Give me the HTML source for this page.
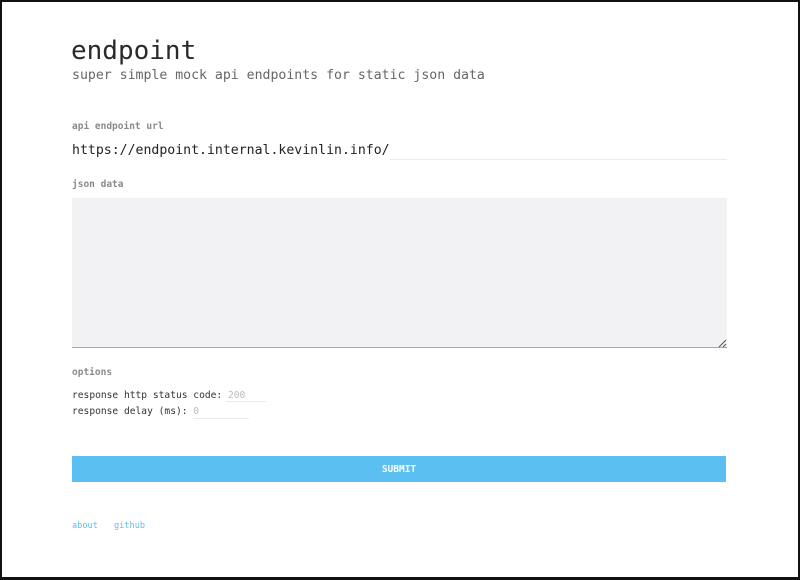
<!DOCTYPE html>
<html><head><meta charset="utf-8"><style>
html,body{margin:0;padding:0}
body{width:800px;height:580px;position:relative;background:#fff;font-family:"DejaVu Sans Mono","Liberation Mono",monospace;overflow:hidden}
.frame{position:absolute;left:0;top:0;width:796px;height:575px;border:2px solid #111;border-bottom-width:3px}
.a{position:absolute;white-space:nowrap}
.lbl{font-size:9.5px;font-weight:bold;color:#8a8a8a}
.t{font-size:9.6px;color:#333}
</style></head><body>
<div class="frame"></div>
<div class="a" style="left:71px;top:36px;font-size:26px;color:#2a2a2a">endpoint</div>
<div class="a" style="left:72px;top:68px;font-size:13.2px;color:#666">super simple mock api endpoints for static json data</div>
<div class="a lbl" style="left:72px;top:121px">api endpoint url</div>
<div class="a" style="left:72px;top:143px;font-size:13.2px;color:#222">https://endpoint.internal.kevinlin.info/</div>
<div class="a" style="left:390px;top:159px;width:337px;height:1px;background:#e4ecf0"></div>
<div class="a lbl" style="left:72px;top:179px">json data</div>
<div class="a" style="left:72px;top:198px;width:655px;height:149px;background:#f2f1f3"></div>
<div class="a" style="left:72px;top:347px;width:655px;height:1px;background:#5bbfef"></div>
<svg class="a" style="left:718px;top:339px" width="9" height="9"><path d="M1 8L8 1M5 8L8 5" stroke="#555" stroke-width="1"/></svg>
<div class="a lbl" style="left:72px;top:367px">options</div>
<div class="a t" style="left:72px;top:390px">response http status code: <span style="color:#bbb">200</span></div>
<div class="a" style="left:226px;top:401px;width:40px;height:1px;background:#e4ecf0"></div>
<div class="a t" style="left:72px;top:406px">response delay (ms): <span style="color:#bbb">0</span></div>
<div class="a" style="left:193px;top:418px;width:56px;height:1px;background:#e4ecf0"></div>
<div class="a" style="left:72px;top:456px;width:654px;height:26px;background:#5bbff2;color:#fff;font-size:9.5px;font-weight:bold;text-align:center;line-height:27px">SUBMIT</div>
<div class="a" style="left:72px;top:521px;font-size:8.6px;color:#5bbfef">about</div>
<div class="a" style="left:114px;top:521px;font-size:8.6px;color:#5bbfef">github</div>
</body></html>
